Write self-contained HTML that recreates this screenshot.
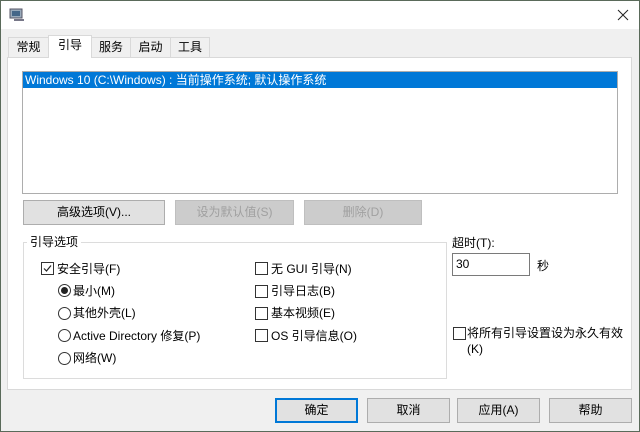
<!DOCTYPE html>
<html><head><meta charset="utf-8"><style>
*{box-sizing:border-box;margin:0;padding:0}
body{width:640px;height:432px;background:#f0f0f0;font-family:"Liberation Sans","Noto Sans CJK SC",sans-serif;font-size:12px;color:#000;position:relative;overflow:hidden}
.a{position:absolute}
.win{left:0;top:0;width:640px;height:432px;border:1px solid #5a6a5a}
.title{left:1px;top:1px;width:638px;height:28px;background:#fff}
.tab{top:37px;height:20px;background:#f0f0f0;border:1px solid #d9d9d9;border-bottom:none;text-align:center;line-height:19px;font-size:12px}
.tab.sel{top:35px;height:23px;background:#fff;border-color:#d9d9d9;z-index:2}
.panel{left:7px;top:57px;width:625px;height:333px;background:#fff;border:1px solid #d9d9d9}
.btn{height:25px;background:#e1e1e1;border:1px solid #adadad;text-align:center;line-height:23px}
.dis{color:#a0a0a0;background:#cccccc;border-color:#bfbfbf}
.cb{width:13px;height:13px;border:1px solid #333;background:#fff}
.rb{width:13px;height:13px;border:1px solid #333;border-radius:50%;background:#fff}
.t{white-space:nowrap;line-height:14px}
</style></head><body>
<div class="a win"></div>
<div class="a title"></div>
<svg class="a" style="left:9px;top:8px" width="16" height="14"><rect x="1" y="1" width="12" height="9" fill="#9ab" stroke="#556"/><rect x="3" y="3" width="8" height="5" fill="#468"/><rect x="5" y="11" width="10" height="2" fill="#778"/></svg>
<svg class="a" style="left:617px;top:9px" width="12" height="12"><path d="M1 1L11 11M11 1L1 11" stroke="#222" stroke-width="1"/></svg>
<div class="a panel"></div>
<div class="a tab" style="left:8px;width:41px">常规</div>
<div class="a tab sel" style="left:48px;width:44px">引导</div>
<div class="a tab" style="left:91px;width:40px">服务</div>
<div class="a tab" style="left:130px;width:41px">启动</div>
<div class="a tab" style="left:170px;width:40px">工具</div>
<div class="a" style="left:22px;top:71px;width:596px;height:123px;border:1px solid #adadad;background:#fff"></div>
<div class="a t" style="left:23px;top:72px;width:594px;height:16px;background:#0078d7;color:#fff;padding-left:2px;line-height:16px">Windows 10 (C:\Windows) : 当前操作系统; 默认操作系统</div>
<div class="a btn" style="left:23px;top:200px;width:142px">高级选项(V)...</div>
<div class="a btn dis" style="left:175px;top:200px;width:119px">设为默认值(S)</div>
<div class="a btn dis" style="left:304px;top:200px;width:118px">删除(D)</div>
<div class="a" style="left:23px;top:242px;width:424px;height:137px;border:1px solid #dcdcdc"></div>
<div class="a t" style="left:27px;top:235px;background:#fff;padding:0 3px">引导选项</div>
<div class="a cb" style="left:41px;top:262px"></div>
<svg class="a" style="left:42px;top:263px" width="11" height="11"><path d="M2 5.5L4.5 8L9 2.5" stroke="#222" fill="none" stroke-width="1.2"/></svg>
<div class="a t" style="left:57px;top:262px">安全引导(F)</div>
<div class="a rb" style="left:58px;top:284px"></div><div class="a" style="left:61px;top:287px;width:7px;height:7px;border-radius:50%;background:#222"></div>
<div class="a t" style="left:73px;top:284px">最小(M)</div>
<div class="a rb" style="left:58px;top:307px"></div><div class="a t" style="left:73px;top:306px">其他外壳(L)</div>
<div class="a rb" style="left:58px;top:329px"></div><div class="a t" style="left:73px;top:329px">Active Directory 修复(P)</div>
<div class="a rb" style="left:58px;top:352px"></div><div class="a t" style="left:73px;top:351px">网络(W)</div>
<div class="a cb" style="left:255px;top:262px"></div><div class="a t" style="left:271px;top:262px">无 GUI 引导(N)</div>
<div class="a cb" style="left:255px;top:285px"></div><div class="a t" style="left:271px;top:284px">引导日志(B)</div>
<div class="a cb" style="left:255px;top:307px"></div><div class="a t" style="left:271px;top:306px">基本视频(E)</div>
<div class="a cb" style="left:255px;top:329px"></div><div class="a t" style="left:271px;top:329px">OS 引导信息(O)</div>
<div class="a t" style="left:452px;top:236px">超时(T):</div>
<div class="a" style="left:452px;top:253px;width:78px;height:23px;border:1px solid #7a7a7a;background:#fff;padding:3px 0 0 3px">30</div>
<div class="a t" style="left:537px;top:259px">秒</div>
<div class="a cb" style="left:453px;top:327px"></div>
<div class="a t" style="left:467px;top:326px">将所有引导设置设为永久有效</div>
<div class="a t" style="left:467px;top:342px">(K)</div>
<div class="a btn" style="left:275px;top:398px;width:83px;border:2px solid #0078d7;line-height:21px">确定</div>
<div class="a btn" style="left:367px;top:398px;width:83px">取消</div>
<div class="a btn" style="left:457px;top:398px;width:83px">应用(A)</div>
<div class="a btn" style="left:549px;top:398px;width:83px">帮助</div>
</body></html>
